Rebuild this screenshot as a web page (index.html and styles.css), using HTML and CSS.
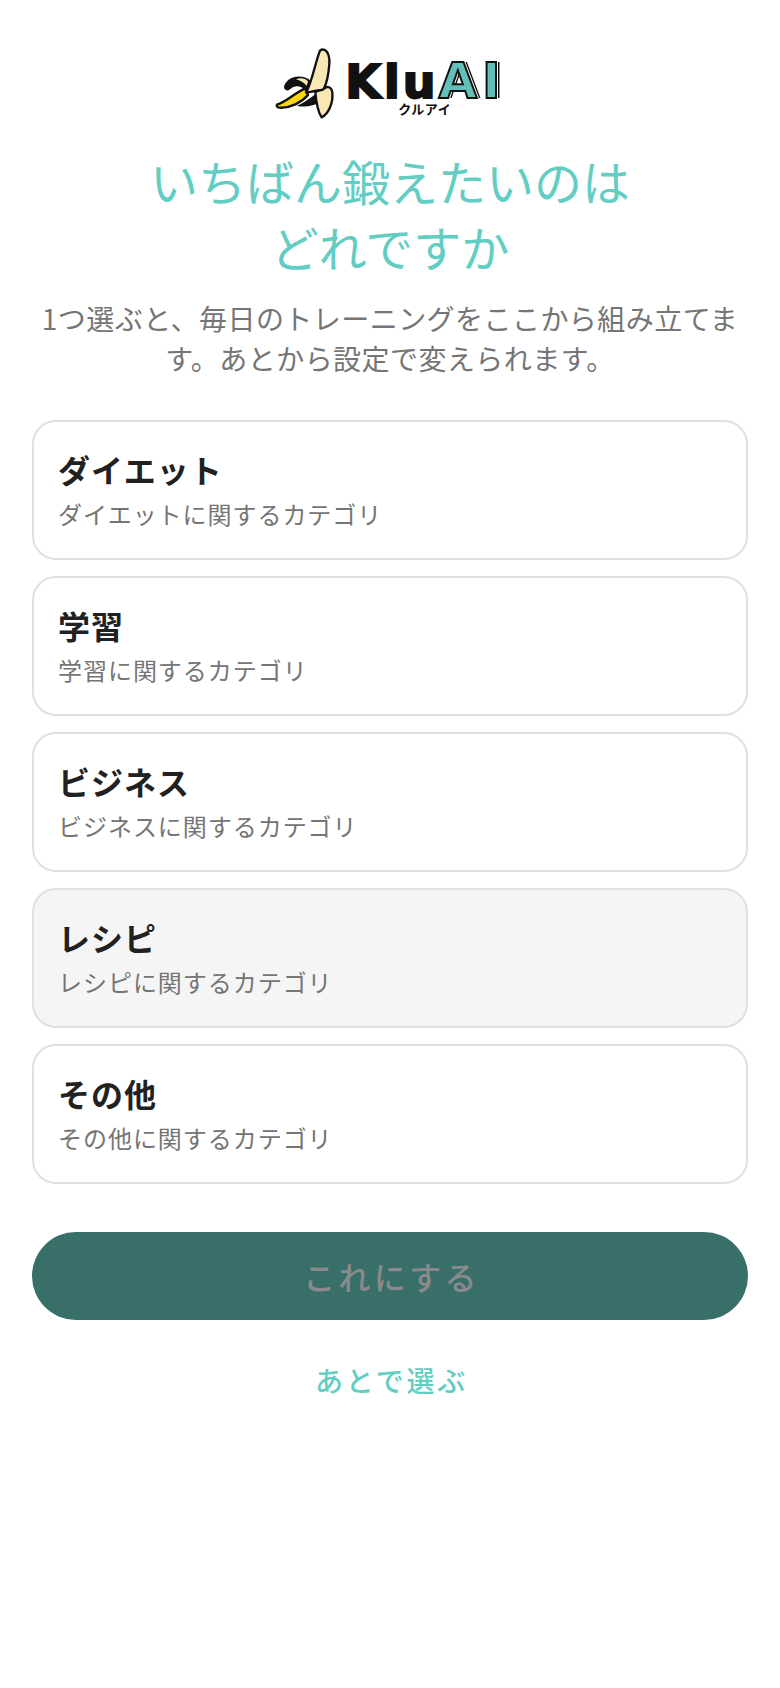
FILE: index.html
```html
<!DOCTYPE html>
<html lang="ja">
<head>
    <meta charset="UTF-8">
    <meta name="viewport" content="width=device-width, initial-scale=1.0">
    <title>KluAI</title>
    <link rel="stylesheet" href="styles.css">
</head>
<body>
    <div class="screen">
        <div class="logo">
            <svg class="logo-banana" viewBox="0 0 225 255" aria-hidden="true">
                <path d="M45 140C55 110 95 104 120 124L114 152C92 132 72 132 57 146C51 151 45 146 45 140Z" fill="#111" stroke="#111" stroke-width="6" stroke-linejoin="round"/>
                <path d="M78 118C92 112 106 115 114 124L110 137C100 127 90 121 78 118Z" fill="#f9e7b4"/>
                <path d="M22 193C45 188 65 165 105 145L114 165C95 187 60 205 28 203C20 202 18 196 22 193Z" fill="#f8d90f" stroke="#111" stroke-width="7" stroke-linejoin="round"/>
                <path d="M80 197C100 190 120 175 145 156L152 186C130 198 105 203 80 197Z" fill="#111"/>
                <path d="M150 32C165 20 180 40 178 70C176 105 170 130 160 150C145 150 125 155 108 158C125 130 135 70 150 32Z" fill="#f9e7b4" stroke="#111" stroke-width="7" stroke-linejoin="round"/>
                <path d="M160 148C170 136 185 140 187 158C190 190 175 222 155 232C143 215 138 180 136 156C145 150 152 152 160 148Z" fill="#f9e7b4" stroke="#111" stroke-width="7" stroke-linejoin="round"/>
            </svg>
            <div class="logo-words">
                <div class="logo-name">Klu<span class="logo-ai">AI</span></div>
                <div class="logo-kana">クルアイ</div>
            </div>
        </div>

        <h1 class="title">いちばん鍛えたいのは<br>どれですか</h1>
        <p class="lead">1つ選ぶと、毎日のトレーニングをここから組み立てます。あとから設定で変えられます。</p>

        <div class="cards">
            <div class="card">
                <div class="card-title">ダイエット</div>
                <div class="card-sub">ダイエットに関するカテゴリ</div>
            </div>
            <div class="card">
                <div class="card-title">学習</div>
                <div class="card-sub">学習に関するカテゴリ</div>
            </div>
            <div class="card">
                <div class="card-title">ビジネス</div>
                <div class="card-sub">ビジネスに関するカテゴリ</div>
            </div>
            <div class="card card-hover">
                <div class="card-title">レシピ</div>
                <div class="card-sub">レシピに関するカテゴリ</div>
            </div>
            <div class="card">
                <div class="card-title">その他</div>
                <div class="card-sub">その他に関するカテゴリ</div>
            </div>
        </div>

        <button class="btn-primary" disabled>これにする</button>
        <a class="btn-later">あとで選ぶ</a>
    </div>
</body>
</html>
```

FILE: styles.css
```css
* { margin: 0; padding: 0; box-sizing: border-box; }
body {
    font-family: "Noto Sans CJK JP", "Noto Sans", sans-serif;
    background: #fff;
}
.screen {
    min-height: 1688px;
    padding: 40px 32px 0;
    display: flex;
    flex-direction: column;
    align-items: stretch;
}
.logo {
    display: flex;
    justify-content: center;
    align-items: flex-start;
    height: 85px;
    padding-right: 4px;
}
.logo-banana { width: 75px; height: 85px; }
.logo-words { padding-top: 19px; }
.logo-name {
    font-family: "DejaVu Sans", sans-serif;
    font-weight: 700;
    font-size: 46px;
    line-height: 44px;
    letter-spacing: 3px;
    color: #111;
    -webkit-text-stroke: 2px #111;
}
.logo-ai {
    font-size: 50px;
    letter-spacing: 5px;
    color: #62c0b8;
    text-shadow: 2px 0 0 #fff, 3.5px 0 0 #111;
}
.logo-kana {
    font-size: 13px;
    line-height: 12px;
    letter-spacing: 0.5px;
    font-weight: 700;
    color: #111;
    margin-top: -1px;
    margin-left: 53px;
}
.title {
    margin-top: 22px;
    font-size: 48px;
    line-height: 66px;
    font-weight: 400;
    color: #62cdc3;
    text-align: center;
}
.lead {
    margin-top: 19px;
    font-size: 28px;
    line-height: 40px;
    letter-spacing: 0.45px;
    color: #757575;
    text-align: center;
}
.cards {
    margin-top: 42px;
    display: flex;
    flex-direction: column;
    gap: 16px;
}
.card {
    height: 140px;
    padding: 0 24px 2px;
    border: 2px solid #e0e0e0;
    border-radius: 24px;
    background: #fff;
    display: flex;
    flex-direction: column;
    justify-content: center;
    gap: 6px;
}
.card-hover { background: #f5f5f5; }
.card-title {
    font-size: 32px;
    line-height: 44px;
    letter-spacing: 1px;
    font-weight: 700;
    color: #212121;
}
.card-sub {
    font-size: 24px;
    line-height: 34px;
    letter-spacing: 0.96px;
    color: #757575;
}
.btn-primary {
    margin-top: 48px;
    height: 88px;
    padding-left: 3px;
    border: none;
    border-radius: 44px;
    background: #396f69;
    font-family: inherit;
    font-size: 32px;
    font-weight: 500;
    letter-spacing: 3.2px;
    color: #8a8a8a;
}
.btn-later {
    margin-top: 38px;
    padding-left: 3px;
    font-size: 28px;
    font-weight: 500;
    line-height: 44px;
    letter-spacing: 2.8px;
    color: #62cdc3;
    text-align: center;
}
```
